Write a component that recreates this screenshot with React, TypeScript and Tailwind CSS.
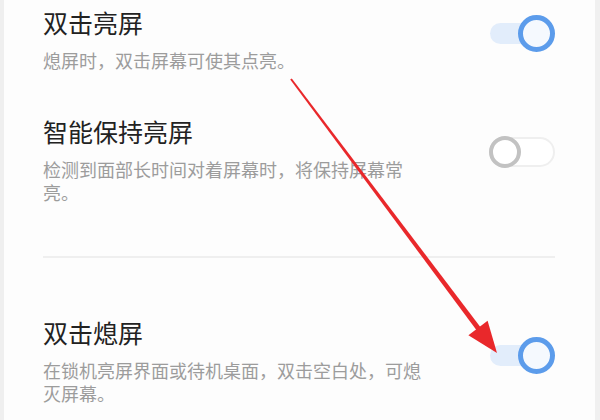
import type { ReactNode } from 'react';

const font = { fontFamily: '"Noto Sans CJK SC", "Noto Sans", sans-serif' };

function ToggleOn() {
  return (
    <div className="relative h-[37px] w-[65px] shrink-0">
      <div className="absolute left-0 top-[8px] h-[21px] w-[44px] rounded-full bg-[#e2edfb]" />
      <div className="absolute right-0 top-0 h-[37px] w-[37px] rounded-full border-[5px] border-[#5c9ceb] bg-[#f5f9fe]" />
    </div>
  );
}

function ToggleOff() {
  return (
    <div className="relative h-[32px] w-[66px] shrink-0">
      <div className="absolute inset-x-0 top-[1px] h-[30px] rounded-full border-2 border-[#efefef] bg-white" />
      <div className="absolute left-0 top-0 h-[32px] w-[32px] rounded-full border-[4px] border-[#c2c2c2] bg-white" />
    </div>
  );
}

interface RowProps {
  title: string;
  children: ReactNode;
  toggle: ReactNode;
  toggleTop: string;
  className?: string;
}

function SettingRow({ title, children, toggle, toggleTop, className }: RowProps) {
  return (
    <div className={`flex items-start justify-between ${className ?? ''}`}>
      <div className="w-[380px]">
        <h2 className="text-[25px] leading-[30px] text-[#222222]">{title}</h2>
        <p className="mt-[12px] text-[18px] leading-[23px] text-[#9c9c9c]">{children}</p>
      </div>
      <div className={toggleTop}>{toggle}</div>
    </div>
  );
}

function Arrow() {
  // red annotation arrow drawn on top of the screenshot
  return (
    <svg className="pointer-events-none absolute inset-0" width="600" height="420" viewBox="0 0 600 420">
      <polygon points="290.2,79.6 291.8,78.4 483,330.5 479,333.5" fill="#e9282b" />
      <polygon points="497,353 468.4,335.2 487.6,320.8" fill="#e9282b" />
    </svg>
  );
}

export default function App() {
  return (
    <div className="relative flex h-[420px] w-[600px] overflow-hidden bg-white" style={font}>
      <div className="w-[4px] bg-[#efefef]" />
      <div className="flex-1 bg-[#fdfdfd] pl-[39px] pr-[40px]">
        <SettingRow title="双击亮屏" toggle={<ToggleOn />} toggleTop="mt-[8px]" className="pt-[7px]">
          熄屏时，双击屏幕可使其点亮。
        </SettingRow>

        <SettingRow
          title="智能保持亮屏"
          toggle={<ToggleOff />}
          toggleTop="mt-[20px]"
          className="mt-[44px]"
        >
          检测到面部长时间对着屏幕时，将保持屏幕常亮。
        </SettingRow>

        <div className="mt-[52px] h-[2px] bg-[#efefef]" />

        <SettingRow title="双击熄屏" toggle={<ToggleOn />} toggleTop="mt-[20px]" className="mt-[59px]">
          在锁机亮屏界面或待机桌面，双击空白处，可熄灭屏幕。
        </SettingRow>
      </div>
      <div className="w-[5px] bg-[#f0f0f0]" />
      <Arrow />
    </div>
  );
}
